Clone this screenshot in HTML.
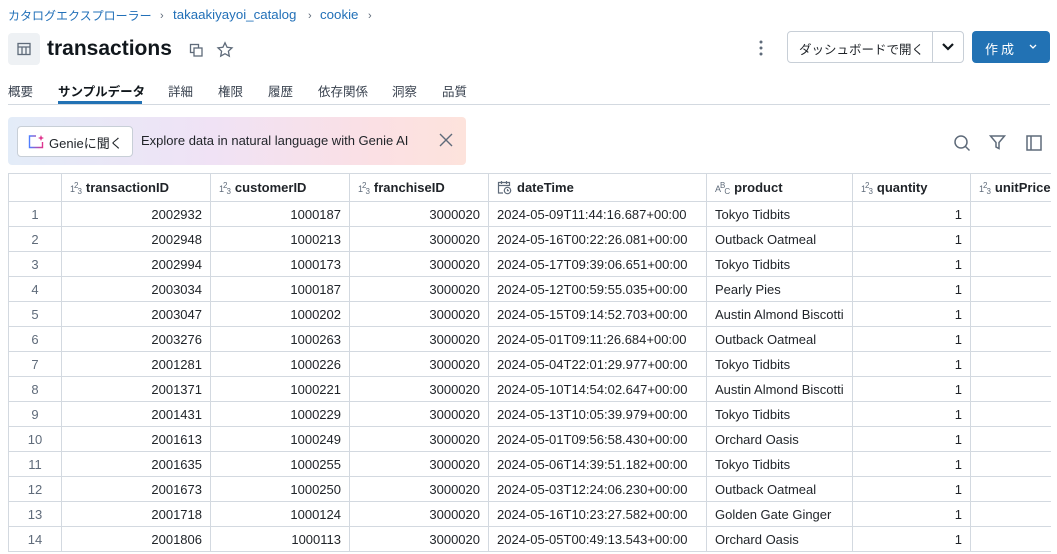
<!DOCTYPE html>
<html><head><meta charset="utf-8"><style>
*{box-sizing:border-box;margin:0;padding:0}
body{width:1057px;height:554px;overflow:hidden;background:#fff;font-family:"Liberation Sans","Noto Sans CJK JP",sans-serif;color:#1f2328;position:relative}
.a{position:absolute}
.bc{top:7px;font-size:13.3px;color:#2270b8;white-space:nowrap}
.sep{position:absolute;top:10px;color:#5f6b7a;font-size:11px}
.tab{position:absolute;top:81px;font-size:12.5px;color:#3a4350;white-space:nowrap}
table{position:absolute;left:8px;top:173px;border-collapse:collapse;table-layout:fixed;width:1042px;font-size:13px}
td,th{border:1px solid #d3d9e0;height:25px;padding:0 8px;white-space:nowrap;overflow:hidden}
th{height:28px;text-align:left;font-weight:bold;color:#1f2328}
td{color:#1f2328}
td.r{text-align:right}
td.c{text-align:center;color:#5f6b7a}
tr td:last-child,tr th:last-child{border-right:none}
.ic{font-size:9px;color:#5f6b7a;font-weight:normal;margin-right:5px;letter-spacing:-1px}
.ic sup{font-size:8px;vertical-align:4px}.ic sub{font-size:8px;vertical-align:-2px}
</style></head><body>
<div class="a bc" style="left:8px;font-size:12px;top:7px">カタログエクスプローラー</div>
<div class="sep" style="left:160px">›</div>
<div class="a bc" style="left:173px">takaakiyayoi_catalog</div>
<div class="sep" style="left:308px">›</div>
<div class="a bc" style="left:320px">cookie</div>
<div class="sep" style="left:368px">›</div>
<div class="a" style="left:8px;top:33px;width:32px;height:32px;background:#eef1f4;border-radius:4px"></div>
<svg class="a" style="left:16px;top:41px" width="16" height="16" viewBox="0 0 16 16" fill="none" stroke="#5f6b7a" stroke-width="1.3"><rect x="2" y="2.5" width="12" height="11"/><path d="M2 6h12M6 6v7.5M10 6v7.5"/></svg>
<div class="a" style="left:47px;top:37px;font-size:21px;font-weight:bold;color:#11171c">transactions</div>
<svg class="a" style="left:189px;top:43px" width="15" height="15" viewBox="0 0 15 15" fill="none" stroke="#5f6b7a" stroke-width="1.3"><rect x="1.5" y="1.5" width="8" height="8"/><rect x="5" y="5" width="8" height="8" fill="#fff"/></svg>
<svg class="a" style="left:216px;top:41px" width="18" height="18" viewBox="0 0 18 18" fill="none" stroke="#5f6b7a" stroke-width="1.3"><path d="M9 1.8l2.1 4.5 4.9.6-3.6 3.3.9 4.9L9 12.7l-4.3 2.4.9-4.9L2 6.9l4.9-.6z"/></svg>
<svg class="a" style="left:758px;top:40px" width="6" height="16" viewBox="0 0 6 16" fill="#5f6b7a"><circle cx="3" cy="2" r="1.5"/><circle cx="3" cy="8" r="1.5"/><circle cx="3" cy="14" r="1.5"/></svg>
<div class="a" style="left:787px;top:31px;width:177px;height:32px;border:1px solid #c8cfd7;border-radius:4px"></div>
<div class="a" style="left:932px;top:32px;width:1px;height:30px;background:#c8cfd7"></div>
<div class="a" style="left:799px;top:39px;font-size:12.5px;color:#1f2328">ダッシュボードで開く</div>
<svg class="a" style="left:941px;top:41px" width="14" height="12" viewBox="0 0 14 12"><path d="M2 3l5 5 5-5" stroke="#11171c" stroke-width="2.2" fill="none"/></svg>
<div class="a" style="left:972px;top:31px;width:78px;height:32px;background:#2272b4;border-radius:4px"></div>
<div class="a" style="left:985px;top:39px;font-size:13px;color:#fff;letter-spacing:3px">作成</div>
<svg class="a" style="left:1028px;top:43px" width="10" height="8" viewBox="0 0 10 8"><path d="M2 2l3 3 3-3" stroke="#fff" stroke-width="1.3" fill="none"/></svg>
<div class="tab" style="left:8px">概要</div>
<div class="tab" style="left:58px;font-weight:bold;color:#11171c">サンプルデータ</div>
<div class="tab" style="left:168px">詳細</div>
<div class="tab" style="left:218px">権限</div>
<div class="tab" style="left:268px">履歴</div>
<div class="tab" style="left:318px">依存関係</div>
<div class="tab" style="left:392px">洞察</div>
<div class="tab" style="left:442px">品質</div>
<div class="a" style="left:58px;top:101px;width:84px;height:3px;background:#2272b4"></div>
<div class="a" style="left:8px;top:104px;width:1042px;height:1px;background:#d3d9e0"></div>
<div class="a" style="left:8px;top:117px;width:458px;height:48px;border-radius:4px;background:linear-gradient(90deg,#e3ecf8 0%,#f0e2f5 45%,#fbe0e4 80%,#fde3dc 100%)"></div>
<div class="a" style="left:17px;top:126px;width:116px;height:31px;background:#fff;border:1px solid #c8cfd7;border-radius:4px"></div>
<svg class="a" style="left:28px;top:134px" width="17" height="15" viewBox="0 0 17 15" fill="none"><path d="M8 2H1.5v11.5h13V8" stroke="url(#g)" stroke-width="1.4"/><path d="M13 1l.9 2.1L16 4l-2.1.9L13 7l-.9-2.1L10 4l2.1-.9z" fill="#e0368e"/><defs><linearGradient id="g" x1="0" x2="1"><stop offset="0" stop-color="#4f7fff"/><stop offset="1" stop-color="#e0368e"/></linearGradient></defs></svg>
<div class="a" style="left:49px;top:133px;font-size:13px">Genieに聞く</div>
<div class="a" style="left:141px;top:133px;font-size:13px">Explore data in natural language with Genie AI</div>
<svg class="a" style="left:439px;top:133px" width="14" height="14" viewBox="0 0 14 14" stroke="#5f6b7a" stroke-width="1.4"><path d="M1 1l12 12M13 1L1 13"/></svg>
<svg class="a" style="left:953px;top:134px" width="18" height="18" viewBox="0 0 18 18" fill="none" stroke="#5f6b7a" stroke-width="1.5"><circle cx="8" cy="8" r="6"/><path d="M12.5 12.5l4 4"/></svg>
<svg class="a" style="left:989px;top:134px" width="17" height="17" viewBox="0 0 17 17" fill="none" stroke="#5f6b7a" stroke-width="1.5"><path d="M1.5 2h14l-5.5 6.5v6l-3-1.5V8.5z"/></svg>
<svg class="a" style="left:1026px;top:135px" width="16" height="16" viewBox="0 0 16 16" fill="none" stroke="#5f6b7a" stroke-width="1.5"><rect x="1" y="1" width="14" height="14"/><path d="M5 1v14"/></svg>
<table>
<colgroup><col style="width:53px"><col style="width:149px"><col style="width:139px"><col style="width:139px"><col style="width:218px"><col style="width:146px"><col style="width:118px"><col style="width:80px"></colgroup>
<tr><th></th><th><span class="ic">1<sup>2</sup><sub>3</sub></span>transactionID</th><th><span class="ic">1<sup>2</sup><sub>3</sub></span>customerID</th><th><span class="ic">1<sup>2</sup><sub>3</sub></span>franchiseID</th><th><svg width="15" height="15" viewBox="0 0 15 15" fill="none" stroke="#5f6b7a" stroke-width="1.2" style="vertical-align:-3px;margin-right:5px"><path d="M6 13H1.5V2.5h11V6M1.5 5.5h11M4.5 1v3M9.5 1v3"/><circle cx="10.5" cy="10.5" r="3.2"/><path d="M10.5 9v1.6h1.3"/></svg>dateTime</th><th><span class="ic">A<sup>B</sup><sub>C</sub></span>product</th><th><span class="ic">1<sup>2</sup><sub>3</sub></span>quantity</th><th><span class="ic">1<sup>2</sup><sub>3</sub></span>unitPrice</th></tr>
<tr><td class="c">1</td><td class="r">2002932</td><td class="r">1000187</td><td class="r">3000020</td><td>2024-05-09T11:44:16.687+00:00</td><td>Tokyo Tidbits</td><td class="r">1</td><td></td></tr>
<tr><td class="c">2</td><td class="r">2002948</td><td class="r">1000213</td><td class="r">3000020</td><td>2024-05-16T00:22:26.081+00:00</td><td>Outback Oatmeal</td><td class="r">1</td><td></td></tr>
<tr><td class="c">3</td><td class="r">2002994</td><td class="r">1000173</td><td class="r">3000020</td><td>2024-05-17T09:39:06.651+00:00</td><td>Tokyo Tidbits</td><td class="r">1</td><td></td></tr>
<tr><td class="c">4</td><td class="r">2003034</td><td class="r">1000187</td><td class="r">3000020</td><td>2024-05-12T00:59:55.035+00:00</td><td>Pearly Pies</td><td class="r">1</td><td></td></tr>
<tr><td class="c">5</td><td class="r">2003047</td><td class="r">1000202</td><td class="r">3000020</td><td>2024-05-15T09:14:52.703+00:00</td><td>Austin Almond Biscotti</td><td class="r">1</td><td></td></tr>
<tr><td class="c">6</td><td class="r">2003276</td><td class="r">1000263</td><td class="r">3000020</td><td>2024-05-01T09:11:26.684+00:00</td><td>Outback Oatmeal</td><td class="r">1</td><td></td></tr>
<tr><td class="c">7</td><td class="r">2001281</td><td class="r">1000226</td><td class="r">3000020</td><td>2024-05-04T22:01:29.977+00:00</td><td>Tokyo Tidbits</td><td class="r">1</td><td></td></tr>
<tr><td class="c">8</td><td class="r">2001371</td><td class="r">1000221</td><td class="r">3000020</td><td>2024-05-10T14:54:02.647+00:00</td><td>Austin Almond Biscotti</td><td class="r">1</td><td></td></tr>
<tr><td class="c">9</td><td class="r">2001431</td><td class="r">1000229</td><td class="r">3000020</td><td>2024-05-13T10:05:39.979+00:00</td><td>Tokyo Tidbits</td><td class="r">1</td><td></td></tr>
<tr><td class="c">10</td><td class="r">2001613</td><td class="r">1000249</td><td class="r">3000020</td><td>2024-05-01T09:56:58.430+00:00</td><td>Orchard Oasis</td><td class="r">1</td><td></td></tr>
<tr><td class="c">11</td><td class="r">2001635</td><td class="r">1000255</td><td class="r">3000020</td><td>2024-05-06T14:39:51.182+00:00</td><td>Tokyo Tidbits</td><td class="r">1</td><td></td></tr>
<tr><td class="c">12</td><td class="r">2001673</td><td class="r">1000250</td><td class="r">3000020</td><td>2024-05-03T12:24:06.230+00:00</td><td>Outback Oatmeal</td><td class="r">1</td><td></td></tr>
<tr><td class="c">13</td><td class="r">2001718</td><td class="r">1000124</td><td class="r">3000020</td><td>2024-05-16T10:23:27.582+00:00</td><td>Golden Gate Ginger</td><td class="r">1</td><td></td></tr>
<tr><td class="c">14</td><td class="r">2001806</td><td class="r">1000113</td><td class="r">3000020</td><td>2024-05-05T00:49:13.543+00:00</td><td>Orchard Oasis</td><td class="r">1</td><td></td></tr>
</table>
</body></html>
